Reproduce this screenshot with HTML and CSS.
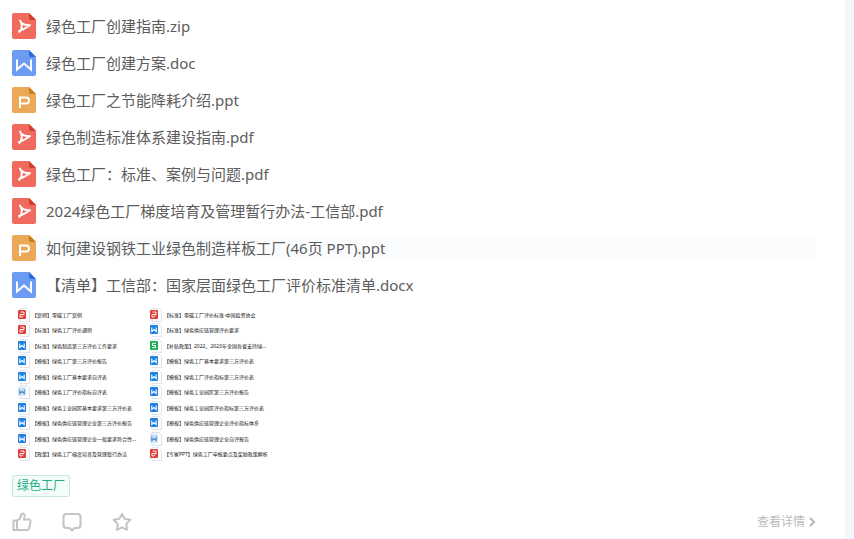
FILE: index.html
```html
<!DOCTYPE html>
<html lang="zh-CN">
<head>
    <meta charset="UTF-8">
    <meta name="viewport" content="width=device-width, initial-scale=1.0">
    <title>绿色工厂</title>
    <link rel="stylesheet" href="styles.css">
</head>
<body>

<!-- shared icons -->
<svg class="defs" aria-hidden="true">
    <symbol id="pdf" viewBox="0 0 24 26">
        <path d="M2 0H17L24 7V24Q24 26 22 26H2Q0 26 0 24V2Q0 0 2 0Z" fill="#f06a5e"/>
        <path d="M17 0L24 7H19Q17 7 17 5Z" fill="#d23c2c"/>
        <path d="M8 7.500Q12 13 7.500 19M9 9.500Q12.500 12.500 18 12.300M7 18Q12 16.500 18 12.300" fill="none" stroke="#fff" stroke-width="2" stroke-linecap="round"/>
    </symbol>
    <symbol id="doc" viewBox="0 0 24 26">
        <path d="M2 0H17L24 7V24Q24 26 22 26H2Q0 26 0 24V2Q0 0 2 0Z" fill="#6b9bf2"/>
        <path d="M17 0L24 7H19Q17 7 17 5Z" fill="#2f6bd8"/>
        <path d="M5 9.500V19.500L12 13.500L19 19.500V9.500" fill="none" stroke="#fff" stroke-width="2"/>
    </symbol>
    <symbol id="ppt" viewBox="0 0 24 26">
        <path d="M2 0H17L24 7V24Q24 26 22 26H2Q0 26 0 24V2Q0 0 2 0Z" fill="#eba857"/>
        <path d="M17 0L24 7H19Q17 7 17 5Z" fill="#cb7d1c"/>
        <path d="M8 21V10.500H14Q17 10.500 17 13.500T14 16.500H8" fill="none" stroke="#fff" stroke-width="2"/>
    </symbol>
    <symbol id="s-pdf" viewBox="0 0 12 14">
        <path d="M2 .5H9L11.500 3V13.500H2Z" fill="#fff" stroke="#d5d9e2" stroke-width=".7"/>
        <rect y="2" width="8" height="9" rx="1" fill="#e0403c"/>
        <path d="M2.500 4H6V6.500H3.500M2 9V6.500H4M2 9H4L5 7.500" fill="none" stroke="#fff" stroke-width=".9"/>
    </symbol>
    <symbol id="s-doc" viewBox="0 0 12 14">
        <path d="M2 .5H9L11.500 3V13.500H2Z" fill="#fff" stroke="#d5d9e2" stroke-width=".7"/>
        <rect y="2" width="8" height="9" rx="1" fill="#1f80e0"/>
        <path d="M1.800 4.500V8.500L4 6.500L6.200 8.500V4.500" fill="none" stroke="#fff" stroke-width="1.100"/>
    </symbol>
    <symbol id="s-old" viewBox="0 0 12 14">
        <path d="M2 .5H9L11.500 3V13.500H2Z" fill="#fff" stroke="#c3d3ea" stroke-width=".7"/>
        <rect y="2" width="8" height="9" rx="1" fill="#d3e3f8"/>
        <path d="M1.800 4.500V8.500L4 6.500L6.200 8.500V4.500" fill="none" stroke="#4a86d8" stroke-width="1.100"/>
    </symbol>
    <symbol id="s-xls" viewBox="0 0 12 14">
        <path d="M2 .5H9L11.500 3V13.500H2Z" fill="#fff" stroke="#d5d9e2" stroke-width=".7"/>
        <rect y="2" width="8" height="9" rx="1" fill="#1fae55"/>
        <path d="M6 4.300H2.500V6.500H5.500V8.700H2" fill="none" stroke="#fff" stroke-width="1"/>
    </symbol>
</svg>

<main class="post">
    <ul class="files">
        <li><a class="file" href="#"><svg class="file-icon"><use href="#pdf"/></svg>绿色工厂创建指南.zip</a></li>
        <li><a class="file" href="#"><svg class="file-icon"><use href="#doc"/></svg>绿色工厂创建方案.doc</a></li>
        <li><a class="file" href="#"><svg class="file-icon"><use href="#ppt"/></svg>绿色工厂之节能降耗介绍.ppt</a></li>
        <li><a class="file" href="#"><svg class="file-icon"><use href="#pdf"/></svg>绿色制造标准体系建设指南.pdf</a></li>
        <li><a class="file" href="#"><svg class="file-icon"><use href="#pdf"/></svg>绿色工厂：标准、案例与问题.pdf</a></li>
        <li><a class="file" href="#"><svg class="file-icon"><use href="#pdf"/></svg>2024绿色工厂梯度培育及管理暂行办法-工信部.pdf</a></li>
        <li><a class="file active" href="#"><svg class="file-icon"><use href="#ppt"/></svg>如何建设钢铁工业绿色制造样板工厂(46页 PPT).ppt</a></li>
        <li><a class="file" href="#"><svg class="file-icon"><use href="#doc"/></svg>【清单】工信部：国家层面绿色工厂评价标准清单.docx</a></li>
    </ul>

    <div class="preview">
        <ul class="preview-col">
            <li><svg class="mini"><use href="#s-pdf"/></svg>【案例】零碳工厂案例</li>
            <li><svg class="mini"><use href="#s-pdf"/></svg>【标准】绿色工厂评价通则</li>
            <li><svg class="mini"><use href="#s-doc"/></svg>【标准】绿色制造第三方评价工作要求</li>
            <li><svg class="mini"><use href="#s-doc"/></svg>【模板】绿色工厂第三方评价报告</li>
            <li><svg class="mini"><use href="#s-doc"/></svg>【模板】绿色工厂基本要求自评表</li>
            <li><svg class="mini"><use href="#s-old"/></svg>【模板】绿色工厂评价指标自评表</li>
            <li><svg class="mini"><use href="#s-doc"/></svg>【模板】绿色工业园区基本要求第三方评价表</li>
            <li><svg class="mini"><use href="#s-doc"/></svg>【模板】绿色供应链管理企业第三方评价报告</li>
            <li><svg class="mini"><use href="#s-doc"/></svg>【模板】绿色供应链管理企业一般要求符合性...</li>
            <li><svg class="mini"><use href="#s-pdf"/></svg>【政策】绿色工厂梯度培育及管理暂行办法</li>
        </ul>
        <ul class="preview-col">
            <li><svg class="mini"><use href="#s-pdf"/></svg>【标准】零碳工厂评价标准-中国投资协会</li>
            <li><svg class="mini"><use href="#s-doc"/></svg>【标准】绿色供应链管理评价要求</li>
            <li><svg class="mini"><use href="#s-xls"/></svg>【补贴政策】2022、2023年全国各省支持绿...</li>
            <li><svg class="mini"><use href="#s-doc"/></svg>【模板】绿色工厂基本要求第三方评价表</li>
            <li><svg class="mini"><use href="#s-doc"/></svg>【模板】绿色工厂评价指标第三方评价表</li>
            <li><svg class="mini"><use href="#s-doc"/></svg>【模板】绿色工业园区第三方评价报告</li>
            <li><svg class="mini"><use href="#s-doc"/></svg>【模板】绿色工业园区评价指标第三方评价表</li>
            <li><svg class="mini"><use href="#s-doc"/></svg>【模板】绿色供应链管理企业评价指标体系</li>
            <li><svg class="mini"><use href="#s-old"/></svg>【模板】绿色供应链管理企业自评报告</li>
            <li><svg class="mini"><use href="#s-pdf"/></svg>【专家PPT】绿色工厂申报要点及奖励政策解析</li>
        </ul>
    </div>

    <a class="tag" href="#">绿色工厂</a>

    <div class="actions">
        <button class="action" aria-label="点赞">
            <svg viewBox="0 0 20 20"><path d="M1.500 8.500H5V18H1.500ZM5 8.500Q8.500 7 9 3.500Q9.200 1.500 10.700 1.500Q13 1.700 12.500 5L12 7.500H16.500Q19 7.500 18.500 10L17 16.500Q16.600 18 15 18H5"/></svg>
        </button>
        <button class="action" aria-label="评论">
            <svg viewBox="0 0 20 20"><path d="M4.500 2H15.500Q18.500 2 18.500 5V13Q18.500 16 15.500 16H12.500L10 18.500L7.500 16H4.500Q1.500 16 1.500 13V5Q1.500 2 4.500 2Z"/></svg>
        </button>
        <button class="action" aria-label="收藏">
            <svg viewBox="0 0 20 20"><path d="M10 2L12.600 6.800L18.300 7.800L14.300 11.900L15 17.800L10 15.400L5 17.800L5.700 11.900L1.700 7.800L7.400 6.800Z"/></svg>
        </button>
        <a class="more" href="#">查看详情<svg viewBox="0 0 8 10"><path d="M2 1L6 5L2 9"/></svg></a>
    </div>
</main>

</body>
</html>
```
FILE: styles.css
```css
* {
    box-sizing: border-box;
    margin: 0;
    padding: 0;
}

body {
    background: #f5f6fb;
    padding-right: 9px;
    font-family: "Noto Sans", "Noto Sans CJK SC", sans-serif;
    color: #5c5c5c;
}

ul {
    list-style: none;
}

a {
    text-decoration: none;
}

svg {
    display: block;
    flex: none;
}

.defs {
    position: absolute;
    width: 0;
    height: 0;
}

.post {
    min-height: 100vh;
    padding: 13px 29px 5px 12px;
    background: #fff;
}

.files {
    display: grid;
    gap: 11px;
}

.file {
    display: flex;
    align-items: center;
    gap: 10px;
    height: 26px;
    font-size: 15px;
    line-height: 26px;
    color: #5c5c5c;
    white-space: nowrap;
}

.file.active,
.file:hover {
    background: #fbfcfe;
}

.file-icon {
    width: 24px;
    height: 26px;
}

.preview {
    display: flex;
    gap: 8px;
    height: 155px;
    margin: 9px 0 11px 6px;
    font-size: 5px;
    line-height: 14px;
    color: #111;
}

.preview-col {
    display: grid;
    grid-auto-rows: 1fr;
    width: 124px;
}

.preview-col li {
    display: flex;
    align-items: center;
    gap: 2px;
    white-space: nowrap;
}

.mini {
    width: 12px;
    height: 14px;
}

.tag {
    display: inline-block;
    padding: 0 4px;
    border: 1px solid #c9e9df;
    border-radius: 2px;
    background: #f3fcf9;
    font-size: 12px;
    line-height: 20px;
    color: #1fae86;
}

.actions {
    display: flex;
    align-items: center;
    gap: 30px;
    margin-top: 15px;
}

.action {
    border: none;
    background: none;
    cursor: pointer;
}

.action svg {
    width: 20px;
    height: 20px;
    fill: none;
    stroke: #c4c4c4;
    stroke-width: 2;
    stroke-linejoin: round;
}

.more {
    display: flex;
    align-items: center;
    gap: 3px;
    margin-left: auto;
    font-size: 12px;
    line-height: 20px;
    color: #bbb;
}

.more svg {
    width: 8px;
    height: 10px;
    fill: none;
    stroke: #b5b5b5;
    stroke-width: 2;
}
```
